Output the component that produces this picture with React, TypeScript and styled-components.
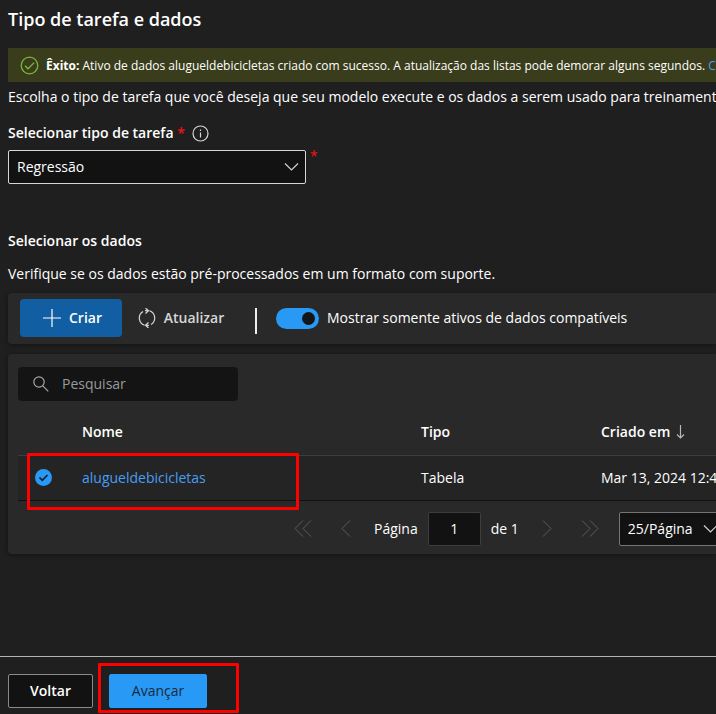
import React from "react";
import styled, { createGlobalStyle, css } from "styled-components";

const GlobalStyle = createGlobalStyle`
  *, *::before, *::after { box-sizing: border-box; }
  body {
    margin: 0;
    background: #1f1f1f;
    color: #fff;
    font: 400 14px/20px "Segoe UI", "Open Sans", "Noto Sans", sans-serif;
  }
  button, input, select { font: inherit; color: inherit; margin: 0; }
`;

const Page = styled.div`
  display: flex;
  flex-direction: column;
  min-height: 100vh;
  overflow: hidden;
`;

const Main = styled.main`
  flex: 1;
  display: flex;
  flex-direction: column;
  padding-left: 8px;
`;

const Title = styled.h1`
  margin: 7px 0 17px;
  font-size: 18px;
  line-height: 24px;
  font-weight: 600;
`;

const Banner = styled.div`
  display: flex;
  align-items: center;
  gap: 7px;
  height: 34px;
  padding: 1px 0 0 12px;
  background: #393d1b;
  font-size: 12px;
  white-space: nowrap;

  svg { flex: none; }
`;

const Link = styled.a`
  color: #479ef5;
  text-decoration: none;
`;

const Text = styled.p`
  margin: 0;
  white-space: nowrap;
`;

const Intro = styled(Text)`
  margin-top: 5px;
`;

const LabelRow = styled.div`
  display: flex;
  align-items: center;
  gap: 7px;
  margin: 16px 0 7px;
  font-weight: 600;
`;

const Required = styled.span`
  color: #f01414;
  line-height: 12px;
`;

const FieldRow = styled.div`
  display: flex;
  align-items: flex-start;
  gap: 4px;
`;

const SelectBox = styled.div<{ $width: number; $muted?: boolean }>`
  position: relative;
  flex: none;
  width: ${(p) => p.$width}px;

  select {
    appearance: none;
    width: 100%;
    height: 34px;
    padding: 0 8px;
    background: #121212;
    border: 1px solid ${(p) => (p.$muted ? "#757575" : "#d6d6d6")};
    border-radius: 2px;
  }

  svg {
    position: absolute;
    top: 10px;
    right: 7px;
    pointer-events: none;
  }
`;

const Heading = styled.h2`
  margin: 47px 0 13px;
  font-size: 14px;
  line-height: 20px;
  font-weight: 600;
`;

const panel = css`
  background: #292929;
  border-radius: 4px 0 0 4px;
  box-shadow: 0 1px 4px rgba(0, 0, 0, 0.4);
`;

const Toolbar = styled.div`
  ${panel}
  display: flex;
  align-items: center;
  height: 51px;
  margin-top: 9px;
  padding: 0 0 1px 12px;
  white-space: nowrap;
`;

const ToolButton = styled.button<{ $primary?: boolean }>`
  display: flex;
  align-items: center;
  justify-content: center;
  gap: 8px;
  height: 38px;
  padding: 0;
  border: 0;
  border-radius: 4px;
  font-weight: 600;
  color: ${(p) => (p.$primary ? "#fff" : "#d6d6d6")};
  background: ${(p) => (p.$primary ? "#115ea3" : "transparent")};
  width: ${(p) => (p.$primary ? 102 : 118)}px;
  padding-left: ${(p) => (p.$primary ? 3 : 0)}px;
`;

const Divider = styled.span`
  width: 2px;
  height: 26px;
  margin: 6px 19px 0 15px;
  background: #f2ece4;
`;

const SwitchLabel = styled.label`
  display: flex;
  align-items: center;
  gap: 8px;
`;

const Switch = styled.input`
  appearance: none;
  display: flex;
  align-items: center;
  justify-content: flex-end;
  width: 43px;
  height: 21px;
  padding-right: 4px;
  border-radius: 11px;
  background: #2899f5;

  &::before {
    content: "";
    width: 13px;
    height: 13px;
    border-radius: 50%;
    background: #151515;
  }
`;

const Card = styled.section`
  ${panel}
  height: 200px;
  margin-top: 10px;
  padding: 13px 0 0 10px;
`;

const SearchBox = styled.label`
  display: flex;
  align-items: center;
  gap: 13px;
  width: 220px;
  height: 34px;
  padding-left: 15px;
  border-radius: 4px;
  background: #141414;

  input {
    flex: 1;
    min-width: 0;
    padding: 0;
    border: 0;
    outline: 0;
    background: transparent;
  }

  input::placeholder { color: #9a9a9a; opacity: 1; }
`;

const TableWrap = styled.div`
  position: relative;
  margin-top: 8px;
`;

const Table = styled.table`
  width: 100%;
  table-layout: fixed;
  border-collapse: collapse;
  white-space: nowrap;

  th, td { padding: 0; text-align: left; }
  th { height: 46px; font-weight: 600; }
  td { height: 45px; background: #242424; }
  thead tr { border-bottom: 1px solid #3d3d3d; }
  tbody tr { border-bottom: 1px solid #111; }
  col:nth-child(1) { width: 64px; }
  col:nth-child(2) { width: 339px; }
  col:nth-child(3) { width: 180px; }
`;

const Sort = styled.span`
  display: flex;
  align-items: center;
  gap: 6px;
`;

const RowCheck = styled.span`
  position: relative;
  display: block;
  width: 17px;
  height: 17px;
  margin-left: 17px;

  input {
    appearance: none;
    display: block;
    width: 17px;
    height: 17px;
    border-radius: 50%;
    background: #2899f5;
  }

  svg {
    position: absolute;
    inset: 0;
    pointer-events: none;
  }
`;

const Highlight = styled.div<{ $inset: string }>`
  position: absolute;
  inset: ${(p) => p.$inset};
  border: 3px solid #fe0000;
  border-radius: 1px;
  pointer-events: none;
`;

const RowHighlight = styled(Highlight)`
  width: 272px;
`;

const Pager = styled.nav`
  display: flex;
  align-items: center;
  margin-top: 11px;
  padding-left: 274px;
  gap: 18px;
  white-space: nowrap;
`;

const PagerButton = styled.button`
  display: flex;
  justify-content: center;
  flex: none;
  width: 21px;
  padding: 0;
  border: 0;
  background: none;
  color: #5c5c5c;
`;

const PagerGroup = styled.div<{ $gap: number }>`
  display: flex;
  align-items: center;
  gap: ${(p) => p.$gap}px;
  flex: none;
`;

const PageInput = styled.input`
  width: 53px;
  height: 34px;
  padding: 0;
  border: 1px solid #3d3d3d;
  border-radius: 2px;
  background: #121212;
  text-align: center;
`;

const Footer = styled.footer`
  display: flex;
  align-items: center;
  gap: 16px;
  height: 58px;
  padding: 11px 0 0 8px;
  border-top: 1px solid #b3b3b3;
`;

const FooterButton = styled.button<{ $primary?: boolean }>`
  width: ${(p) => (p.$primary ? 98 : 85)}px;
  height: 34px;
  padding: 0;
  border: 1px solid ${(p) => (p.$primary ? "#2899f5" : "#8a8a8a")};
  border-radius: 2px;
  background: ${(p) => (p.$primary ? "#2899f5" : "#121212")};
  color: ${(p) => (p.$primary ? "#1b2a3a" : "#fff")};
  font-weight: ${(p) => (p.$primary ? 400 : 600)};
`;

const Anchor = styled.div`
  position: relative;
  display: flex;
`;

type StrokeProps = {
  d: string;
  w: number;
  h: number;
  color?: string;
  weight?: number;
};

const Stroke = ({ d, w, h, color = "currentColor", weight = 1 }: StrokeProps) => (
  <svg width={w} height={h} viewBox={`0 0 ${w} ${h}`} fill="none" stroke={color} strokeWidth={weight} aria-hidden="true">
    <path d={d} />
  </svg>
);

const Chevron = () => <Stroke w={15} h={14} d="M1 3.5 7.5 10 14 3.5" color="#d0d0d0" weight={1.2} />;

export default function App() {
  return (
    <Page>
      <GlobalStyle />
      <Main>
        <Title>Tipo de tarefa e dados</Title>
        <Banner role="status">
          <Stroke w={19} h={19} color="#7cb83c" weight={1.3} d="M9.5 1.2a8.3 8.3 0 1 1 0 16.6a8.3 8.3 0 1 1 0-16.6M5 9.8l3 3 6.200-6.200" />
          <span>
            <b>Êxito:</b> Ativo de dados alugueldebicicletas criado com sucesso. A atualização das listas pode demorar
            alguns segundos. <Link href="#lista">Clique aqui</Link>
          </span>
        </Banner>
        <Intro>
          Escolha o tipo de tarefa que você deseja que seu modelo execute e os dados a serem usado para treinamento
        </Intro>

        <LabelRow>
          <label htmlFor="task">
            Selecionar tipo de tarefa <Required>*</Required>
          </label>
          <Stroke w={17} h={17} color="#d6d6d6" weight={1.2} d="M8.500 1a7.500 7.500 0 1 1 0 15a7.500 7.500 0 1 1 0-15M8.500 7.500v5M8.500 4.500v1.500" />
        </LabelRow>
        <FieldRow>
          <SelectBox $width={298}>
            <select id="task" defaultValue="r">
              <option value="r">Regressão</option>
            </select>
            <Chevron />
          </SelectBox>
          <Required>*</Required>
        </FieldRow>

        <Heading>Selecionar os dados</Heading>
        <Text>Verifique se os dados estão pré-processados em um formato com suporte.</Text>

        <Toolbar>
          <ToolButton type="button" $primary>
            <Stroke w={18} h={18} d="M9 0v18M0 9h18" weight={1.2} />
            Criar
          </ToolButton>
          <ToolButton type="button">
            <Stroke
              w={18}
              h={20}
              weight={1.2}
              d="M5 3.500A7.600 7.600 0 0 0 6.500 17.200M13 16.500A7.600 7.600 0 0 0 11.500 2.800M7.500 0l3 2.700-3 2.800M10.500 14.500l-3 2.800 3 2.700M7 2.700h3.500M11 17.300H7.500"
            />
            Atualizar
          </ToolButton>
          <Divider />
          <SwitchLabel>
            <Switch type="checkbox" role="switch" defaultChecked />
            Mostrar somente ativos de dados compatíveis
          </SwitchLabel>
        </Toolbar>

        <Card>
          <SearchBox>
            <Stroke w={16} h={16} color="#a6a6a6" weight={1.2} d="M6 .8a5.200 5.200 0 1 1 0 10.400a5.200 5.200 0 1 1 0-10.400M9.800 9.800l5.500 5.500" />
            <input type="search" placeholder="Pesquisar" aria-label="Pesquisar" />
          </SearchBox>

          <TableWrap>
            <Table>
              <colgroup>
                <col />
                <col />
                <col />
                <col />
              </colgroup>
              <thead>
                <tr>
                  <th />
                  <th>Nome</th>
                  <th>Tipo</th>
                  <th>
                    <Sort>
                      Criado em
                      <Stroke w={9} h={14} color="#b8b8b8" weight={1.200} d="M4.500 0v13M1 9.500 4.500 13 8 9.500" />
                    </Sort>
                  </th>
                </tr>
              </thead>
              <tbody>
                <tr>
                  <td>
                    <RowCheck>
                      <input type="radio" defaultChecked aria-label="alugueldebicicletas" />
                      <Stroke w={17} h={17} color="#10202e" weight={1.700} d="M4.500 8.500 7.300 11.300 12.500 6" />
                    </RowCheck>
                  </td>
                  <td>
                    <Link href="#alugueldebicicletas">alugueldebicicletas</Link>
                  </td>
                  <td>Tabela</td>
                  <td>Mar 13, 2024 12:4</td>
                </tr>
              </tbody>
            </Table>
            <RowHighlight $inset="44px auto -9px 9px" />
          </TableWrap>

          <Pager aria-label="Paginação">
            <PagerGroup $gap={22}>
              <PagerButton type="button" aria-label="Primeira página">
                <Stroke w={18} h={17} d="M9 .5l-8 8 8 8M17 .5l-8 8 8 8" />
              </PagerButton>
              <PagerButton type="button" aria-label="Página anterior">
                <Stroke w={10} h={17} d="M9 .5l-8 8 8 8" />
              </PagerButton>
            </PagerGroup>
            <PagerGroup $gap={10}>
              <label htmlFor="page">Página</label>
              <PageInput id="page" type="text" defaultValue="1" />
              <span>de 1</span>
            </PagerGroup>
            <PagerGroup $gap={22}>
              <PagerButton type="button" aria-label="Próxima página">
                <Stroke w={10} h={17} d="M1 .5l8 8-8 8" />
              </PagerButton>
              <PagerButton type="button" aria-label="Última página">
                <Stroke w={18} h={17} d="M1 .5l8 8-8 8M9 .5l8 8-8 8" />
              </PagerButton>
            </PagerGroup>
            <SelectBox $width={106} $muted>
              <select aria-label="Itens por página" defaultValue="25">
                <option value="25">25/Página</option>
              </select>
              <Chevron />
            </SelectBox>
          </Pager>
        </Card>
      </Main>

      <Footer>
        <FooterButton type="button">Voltar</FooterButton>
        <Anchor>
          <FooterButton type="button" $primary>
            Avançar
          </FooterButton>
          <Highlight $inset="-11px -32px -5px -11px" />
        </Anchor>
      </Footer>
    </Page>
  );
}
